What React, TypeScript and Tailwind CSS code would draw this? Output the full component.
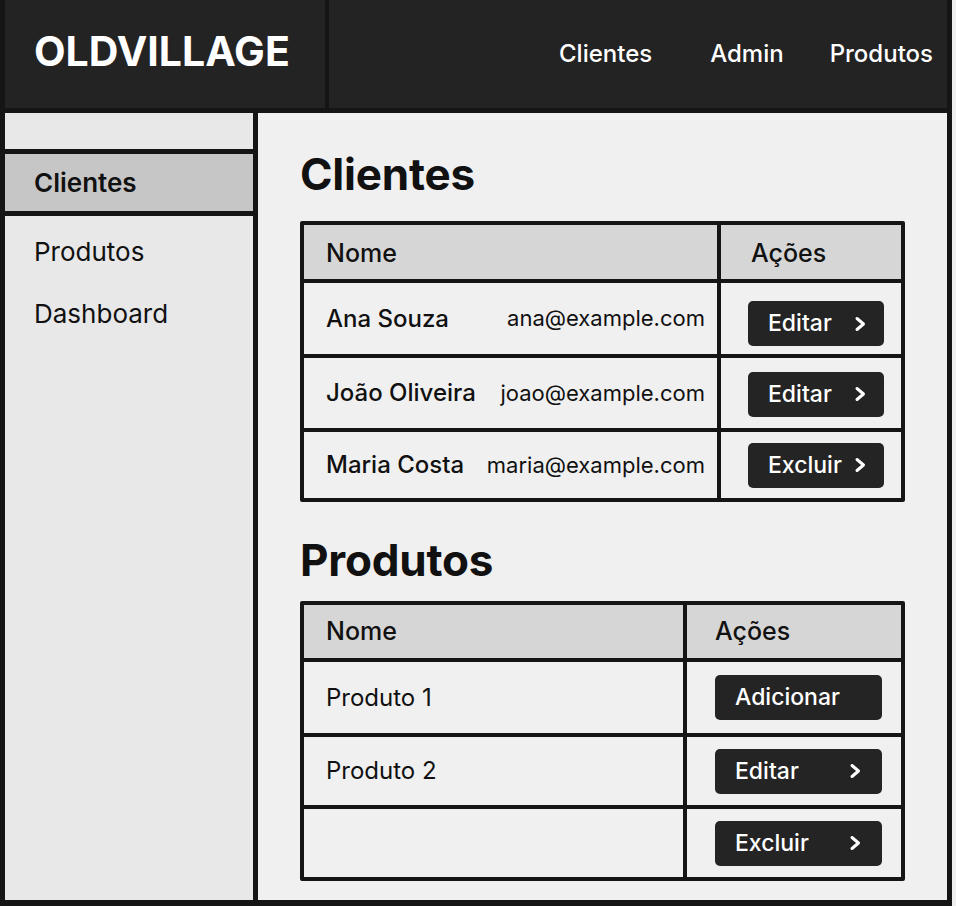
import React from 'react'

type ClientRow = { name: string; email: string; action: string; h: string; pad: string }
type ProductRow = { name: string; action: string; chevron: boolean; h: string }

const clients: ClientRow[] = [
  { name: 'Ana Souza', email: 'ana@example.com', action: 'Editar', h: 'h-[75px]', pad: 'pt-[10px]' },
  { name: 'João Oliveira', email: 'joao@example.com', action: 'Editar', h: 'h-[74px]', pad: 'pt-[2px]' },
  { name: 'Maria Costa', email: 'maria@example.com', action: 'Excluir', h: 'h-[70px]', pad: 'pt-0' },
]

const products: ProductRow[] = [
  { name: 'Produto 1', action: 'Adicionar', chevron: false, h: 'h-[75px]' },
  { name: 'Produto 2', action: 'Editar', chevron: true, h: 'h-[72px]' },
  { name: '', action: 'Excluir', chevron: true, h: 'h-[72px]' },
]

function Chevron() {
  return (
    <svg width="14" height="16" viewBox="0 0 14 16" fill="none" stroke="currentColor" strokeWidth="3" strokeLinecap="round" strokeLinejoin="round">
      <path d="M4 2.5 L10.5 8 L4 13.5" />
    </svg>
  )
}

function Header() {
  return (
    <header className="flex h-[113px] shrink-0 border-b-[5px] border-[#151515] bg-[#232323] text-white">
      <div className="flex w-[324px] items-center border-r-[4px] border-[#151515] pb-[6px] pl-[29px]">
        <span className="text-[41px] font-bold leading-none">OLDVILLAGE</span>
      </div>
      <nav className="flex flex-1 items-center justify-end pr-[14px] text-[24px] font-medium">
        <a className="mr-[58px]">Clientes</a>
        <a className="mr-[46px]">Admin</a>
        <a>Produtos</a>
      </nav>
    </header>
  )
}

function Sidebar() {
  return (
    <aside className="w-[253px] shrink-0 border-r-[5px] border-[#151515] bg-[#e8e8e8] text-[#111]">
      <div className="h-[36px]" />
      <div className="flex h-[67px] items-center border-y-[5px] border-[#151515] bg-[#c6c6c6] pl-[29px] text-[26px] font-semibold">
        Clientes
      </div>
      <div className="pt-[4px] text-[26px]">
        <div className="flex h-[62px] items-center pl-[29px]">Produtos</div>
        <div className="flex h-[62px] items-center pl-[29px]">Dashboard</div>
      </div>
    </aside>
  )
}

function ClientsTable() {
  return (
    <div className="w-[605px] rounded-[2px] border-[4px] border-[#151515]">
      <div className="grid h-[54px] grid-cols-[413px_1fr] bg-[#d6d6d6] text-[25px] font-medium">
        <div className="flex items-center pl-[22px] pt-[4px]">Nome</div>
        <div className="flex items-center border-l-[4px] border-[#151515] pl-[30px] pt-[4px]">Ações</div>
      </div>
      {clients.map((c) => (
        <div key={c.name} className={`grid grid-cols-[413px_1fr] border-t-[4px] border-[#151515] bg-[#f0f0f0] ${c.h}`}>
          <div className="flex items-center justify-between pl-[22px] pr-[12px]">
            <span className="text-[24px] font-medium">{c.name}</span>
            <span className="text-[22px]">{c.email}</span>
          </div>
          <div className={`flex items-center border-l-[4px] border-[#151515] pl-[27px] ${c.pad}`}>
            <button className="flex h-[45px] w-[136px] items-center justify-between rounded-[5px] bg-[#242424] pl-[20px] pr-[17px] text-[23px] font-medium text-white">
              {c.action}
              <Chevron />
            </button>
          </div>
        </div>
      ))}
    </div>
  )
}

function ProductsTable() {
  return (
    <div className="w-[605px] rounded-[2px] border-[4px] border-[#151515]">
      <div className="grid h-[53px] grid-cols-[379px_1fr] bg-[#d6d6d6] text-[25px] font-medium">
        <div className="flex items-center pl-[22px]">Nome</div>
        <div className="flex items-center border-l-[4px] border-[#151515] pl-[28px]">Ações</div>
      </div>
      {products.map((p) => (
        <div key={p.action + p.name} className={`grid grid-cols-[379px_1fr] border-t-[4px] border-[#151515] bg-[#f0f0f0] ${p.h}`}>
          <div className="flex items-center pl-[22px] text-[24px]">{p.name}</div>
          <div className="flex items-center border-l-[4px] border-[#151515] pl-[28px]">
            <button className="flex h-[45px] w-[167px] items-center justify-between rounded-[5px] bg-[#242424] pl-[20px] pr-[20px] text-[23px] font-medium text-white">
              {p.action}
              {p.chevron && <Chevron />}
            </button>
          </div>
        </div>
      ))}
    </div>
  )
}

export default function App() {
  return (
    <div className="h-[906px] w-[956px] bg-[#efefef] font-['Inter','Liberation_Sans',sans-serif] text-[#111]">
      <div className="flex h-[906px] w-[952px] flex-col border-x-[5px] border-b-[6px] border-[#151515]">
        <Header />
        <div className="flex flex-1">
          <Sidebar />
          <main className="flex-1 bg-[#f0f0f0] px-[42px] pt-[39px]">
            <h1 className="mb-[25px] text-[44px] font-bold leading-none tracking-[-0.2px]">Clientes</h1>
            <ClientsTable />
            <h1 className="mb-[19px] mt-[36px] text-[44px] font-bold leading-none tracking-[-0.2px]">Produtos</h1>
            <ProductsTable />
          </main>
        </div>
      </div>
    </div>
  )
}
